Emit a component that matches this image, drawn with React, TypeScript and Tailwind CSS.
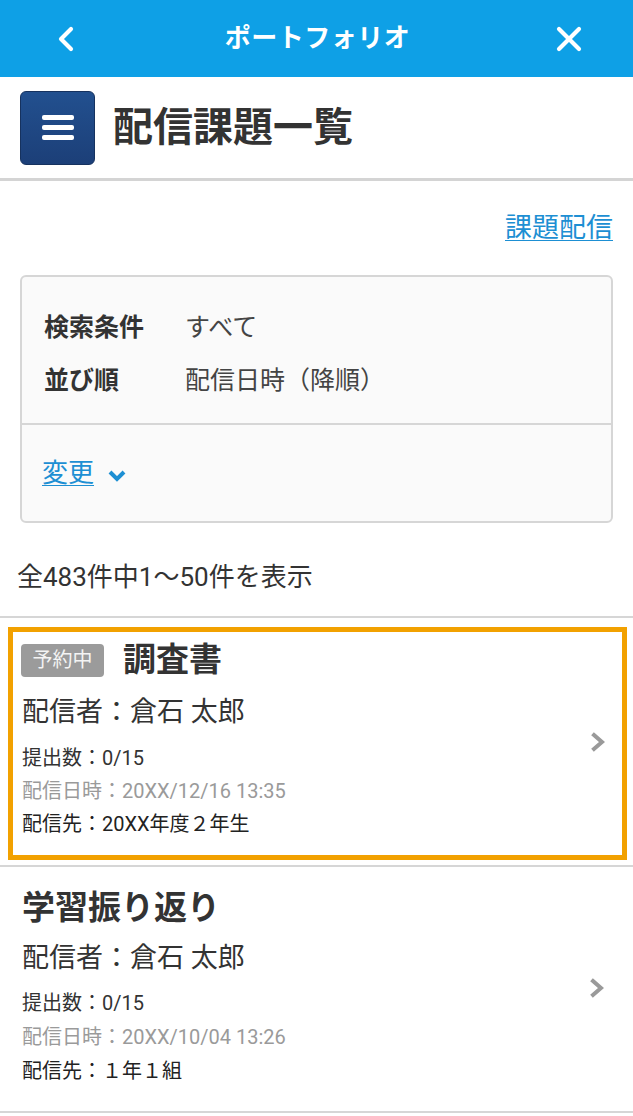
import { ChevronLeft, X } from "lucide-react";

const font = { fontFamily: '"Roboto", "Noto Sans CJK JP", sans-serif' };

const items = [
  {
    badge: "予約中",
    title: "調査書",
    sender: "配信者：倉石 太郎",
    count: "0/15",
    date: "20XX/12/16 13:35",
    to: "20XX年度２年生",
    active: true,
  },
  {
    badge: null,
    title: "学習振り返り",
    sender: "配信者：倉石 太郎",
    count: "0/15",
    date: "20XX/10/04 13:26",
    to: "１年１組",
    active: false,
  },
];

function Arrow() {
  return (
    <svg width="14" height="20" viewBox="0 0 14 20" className="shrink-0">
      <polyline points="3,3 11,10 3,17" fill="none" stroke="#9a9a9a" strokeWidth="4" strokeLinecap="square" />
    </svg>
  );
}

export default function App() {
  return (
    <div className="w-[633px] min-h-[1116px] bg-white text-[#333]" style={font}>
      {/* top bar */}
      <header className="h-[77px] bg-[#0ea0e6] flex items-center justify-between pl-[46px] pr-[44px] text-white">
        <ChevronLeft className="w-[40px] h-[40px]" strokeWidth={2.5} />
        <h1 className="text-[26px] font-bold tracking-[0.5px]">ポートフォリオ</h1>
        <X className="w-[40px] h-[40px]" strokeWidth={2.5} />
      </header>

      {/* page title */}
      <div className="h-[104px] border-b-[3px] border-[#d4d4d4] flex items-center gap-[18px] pl-[20px]">
        <div className="w-[75px] h-[74px] rounded-[6px] bg-gradient-to-b from-[#22508f] to-[#1c3f78] border border-[#16325f] flex flex-col items-center justify-center gap-[5px]">
          <span className="block w-[32px] h-[5px] rounded-[2px] bg-white" />
          <span className="block w-[32px] h-[5px] rounded-[2px] bg-white" />
          <span className="block w-[32px] h-[5px] rounded-[2px] bg-white" />
        </div>
        <h2 className="text-[40px] font-bold text-[#333] leading-none">配信課題一覧</h2>
      </div>

      <div className="px-[20px]">
        <div className="h-[94px] flex items-center justify-end">
          <a className="text-[27px] leading-[36px] text-[#1d8fd3] underline underline-offset-[3px] decoration-1">課題配信</a>
        </div>

        {/* filter box */}
        <div className="border-2 border-[#d6d6d6] rounded-[6px] bg-[#fafafa]">
          <div className="pl-[22px] pt-[24px] pb-[16px] text-[25px] leading-[53px]">
            <div className="flex">
              <span className="w-[141px] font-bold">検索条件</span>
              <span className="text-[#444]">すべて</span>
            </div>
            <div className="flex">
              <span className="w-[141px] font-bold">並び順</span>
              <span className="text-[#444]">配信日時（降順）</span>
            </div>
          </div>
          <div className="border-t-2 border-[#d6d6d6] h-[98px] flex items-center pl-[20px] gap-[13px]">
            <a className="text-[26px] text-[#1d8fd3] underline underline-offset-[3px] decoration-1">変更</a>
            <svg width="20" height="14" viewBox="0 0 20 14" className="mt-[6px]">
              <polyline points="3,3 10,10 17,3" fill="none" stroke="#1d8fd3" strokeWidth="4" />
            </svg>
          </div>
        </div>

        <p className="text-[26px] leading-[32px] text-[#333] pt-[38px] pb-[23px] -ml-[3px]">全483件中1〜50件を表示</p>
      </div>

      <div className="border-t-2 border-[#d6d6d6]">
        {items.map((it) =>
          it.active ? (
            <div key={it.title} className="pt-[9px] pb-[5px] pl-[8px] pr-[6px] border-b-2 border-[#d6d6d6]">
              <div className="border-[5px] border-[#f2a100] flex items-center pl-[8px] pr-[17px] pt-[11px] pb-[14px]">
                <div className="flex-1">
                  <div className="flex items-center gap-[19px] h-[34px]">
                    <span className="bg-[#9b9b9b] text-[#f4f4f4] text-[20px] rounded-[4px] w-[83px] h-[33px] leading-[33px] text-center">
                      {it.badge}
                    </span>
                    <span className="text-[33px] font-bold text-[#333]">{it.title}</span>
                  </div>
                  <div className="text-[27px] text-[#333] mt-[18px] pl-[1px] leading-[34px]">{it.sender}</div>
                  <div className="mt-[13px] pl-[1px] text-[20px] leading-[33px]">
                    <div className="text-[#333]">提出数：{it.count}</div>
                    <div className="text-[#9a9a9a]">配信日時：{it.date}</div>
                    <div className="text-[#222]">配信先：{it.to}</div>
                  </div>
                </div>
                <Arrow />
              </div>
            </div>
          ) : (
            <div key={it.title} className="border-b-2 border-[#d6d6d6] flex items-center pl-[22px] pr-[29px] pt-[21px] pb-[23px]">
              <div className="flex-1">
                <div className="text-[33px] font-bold leading-[40px] text-[#333]">{it.title}</div>
                <div className="text-[27px] text-[#333] mt-[13px] leading-[34px]">{it.sender}</div>
                <div className="mt-[11px] text-[20px] leading-[34px]">
                  <div className="text-[#333]">提出数：{it.count}</div>
                  <div className="text-[#9a9a9a]">配信日時：{it.date}</div>
                  <div className="text-[#222]">配信先：{it.to}</div>
                </div>
              </div>
              <Arrow />
            </div>
          )
        )}
      </div>
    </div>
  );
}
